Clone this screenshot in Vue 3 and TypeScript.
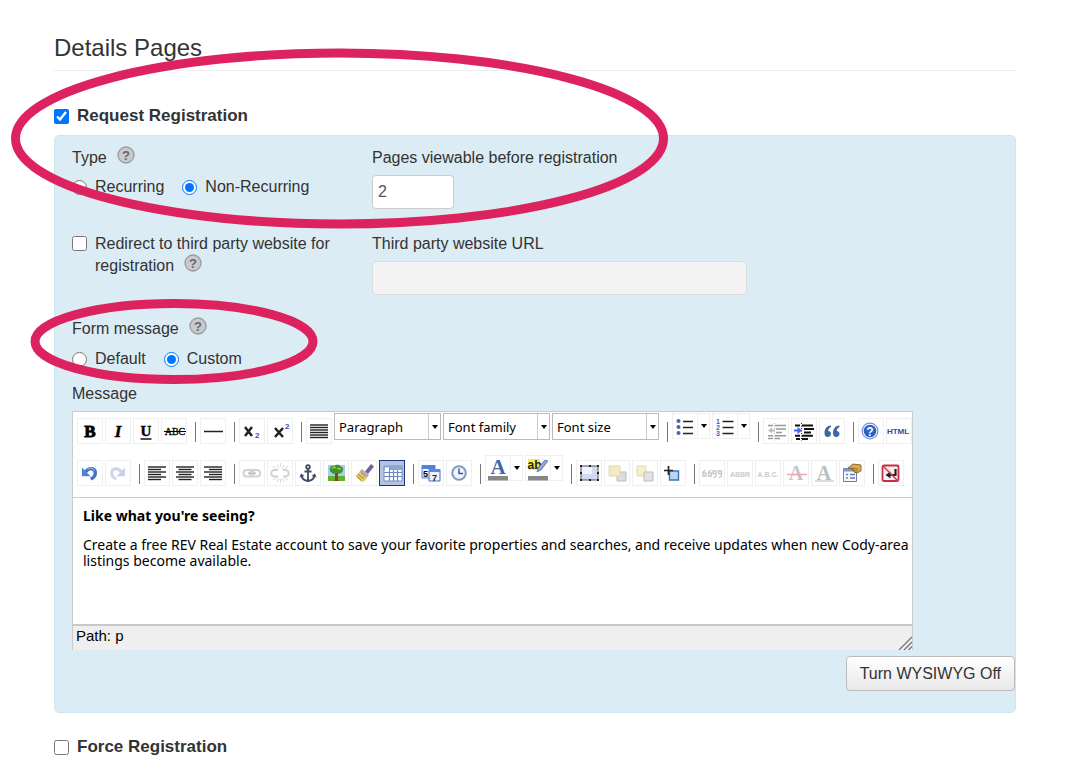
<script setup lang="ts">
import { ref } from 'vue'

interface Tool {
  kind: 'button' | 'split' | 'sep' | 'select'
  label?: string
  icon?: string
  active?: boolean
  disabled?: boolean
  options?: string[]
}

const sep = (): Tool => ({ kind: 'sep' })
const btn = (label: string, icon: string, extra: Partial<Tool> = {}): Tool => ({ kind: 'button', label, icon, ...extra })
const split = (label: string, icon: string): Tool => ({ kind: 'split', label, icon })
const pick = (label: string, options: string[]): Tool => ({ kind: 'select', label, options })

const lineYs = [7, 9.5, 12, 14.5, 17, 19.5]
function lines(align: 'left' | 'center' | 'right' | 'full'): string {
  return lineYs
    .map((y, i) => {
      const w = align === 'full' || i % 2 === 0 ? 18 : 13
      const x = align === 'right' ? 22 - w : align === 'center' ? 13 - w / 2 : 4
      return `<path d="M${x} ${y}h${w}" stroke="#222" stroke-width="1.4"/>`
    })
    .join('')
}

const serif = `font-family="Liberation Serif, serif" font-weight="bold"`
const sans = `font-family="Liberation Sans, sans-serif" font-weight="bold"`

const icons: Record<string, string> = {
  bold: `<text x="13" y="19" font-size="17" text-anchor="middle" stroke="#000" stroke-width=".9" ${serif}>B</text>`,
  italic: `<text x="13" y="19" font-size="17" text-anchor="middle" font-style="italic" stroke="#000" stroke-width=".5" ${serif}>I</text>`,
  underline: `<text x="13" y="18" font-size="15" text-anchor="middle" stroke="#000" stroke-width=".4" ${serif}>U</text><path d="M7.500 21h11" stroke="#000" stroke-width="1.4"/>`,
  strike: `<text x="14" y="17" font-size="10" text-anchor="middle" font-family="Liberation Serif, serif" stroke="#000" stroke-width=".3">ABC</text><path d="M3 13.500h22" stroke="#000" stroke-width="1"/>`,
  hr: `<path d="M4 13.500h19" stroke="#222" stroke-width="1.500"/>`,
  sub: `<path d="M6 9l7 9M13 9l-7 9" fill="none" stroke="#222" stroke-width="2.500"/><text x="16" y="20" font-size="8" fill="#4a3fc0" ${sans}>2</text>`,
  sup: `<path d="M8 10l8 9M16 10l-8 9" fill="none" stroke="#222" stroke-width="2.500"/><text x="18" y="11" font-size="8" fill="#4a3fc0" ${sans}>2</text>`,
  full: lines('full'),
  left: lines('left'),
  center: lines('center'),
  right: lines('right'),
  bullets: `<g fill="#4a64b4"><circle cx="6.500" cy="8" r="2"/><circle cx="6.500" cy="14" r="2"/><circle cx="6.500" cy="20" r="2"/></g><path d="M11 8.500h10M11 14.500h10M11 20.500h10" stroke="#222" stroke-width="1.600"/>`,
  numbers: `<g font-size="7" fill="#3a62c4" ${sans}><text x="4" y="11">1</text><text x="4" y="17">2</text><text x="4" y="23">3</text></g><path d="M10.500 8.500h11M10.500 14.500h11M10.500 20.500h11" stroke="#222" stroke-width="1.600"/>`,
  outdent: `<g stroke="#9a9a9a" stroke-width="1.600"><path d="M5 7.500h5M12 7.500h11M13 11h10M13 14.500h6M12 17.800h11M5 17.800h5M5 20.500h5M12 20.500h5"/></g><path d="M5 12.500l4-3v2h3v2h-3v2z" fill="#b8bcc4"/><path d="M11.500 5v18" stroke="#bbb" stroke-dasharray="1 1.500"/>`,
  indent: `<g stroke="#111" stroke-width="2"><path d="M4 7.500h5M11 7.500h11M13 11h10M13 14.500h7M11 17.800h11M4 17.800h5M5 21h4M11 21h6"/></g><path d="M11 12.500l-4.500-3.500v2.500H3v2h3.500V16z" fill="#3a6ae0"/><path d="M10.500 5v18" stroke="#333" stroke-dasharray="1 1.500"/>`,
  quote: `<path d="M12 7.500c-4 0-6.500 3.200-6.500 7.500 0 2.600 1.300 4 3.200 4s3.300-1.300 3.300-3.200c0-1.700-1.100-2.900-2.800-2.900.2-1.900 1.200-3.200 2.800-3.900zM20.500 7.500c-4 0-6.500 3.200-6.500 7.500 0 2.600 1.300 4 3.200 4s3.300-1.300 3.300-3.200c0-1.700-1.100-2.900-2.800-2.900.2-1.900 1.200-3.200 2.800-3.900z" fill="#3f689f"/>`,
  help: `<circle cx="12" cy="13" r="8.500" fill="#6f92dc"/><circle cx="12" cy="13" r="7.300" fill="#fff"/><circle cx="12" cy="13" r="6.300" fill="#2c60c8"/><text x="12" y="17.500" text-anchor="middle" font-size="12" fill="#fff" ${sans}>?</text>`,
  html: `<text x="12" y="16" text-anchor="middle" font-size="8" fill="#344a9c" ${sans}>HTML</text>`,
  undo: `<path d="M8.500 12c4-5.500 10-3.500 9.800 1.200-.1 2.800-1.700 4.600-4.600 5.800" fill="none" stroke="#4672c6" stroke-width="3.400"/><path d="M5 7.500v8.800h8.500z" fill="#4f80d4"/><path d="M10.500 9.500c3-2.500 6.500-1.300 6.800 1.500" fill="none" stroke="#a4c4f4" stroke-width="1"/>`,
  redo: `<path d="M16.500 12c-4-5.500-10-3.500-9.800 1.200.1 2.800 1.700 4.600 4.600 5.800" fill="none" stroke="#cfd4ea" stroke-width="3"/><path d="M20 7.500v8.800h-8.500z" fill="#c9d0ea"/>`,
  link: `<g fill="none" stroke="#d2d2d2" stroke-width="2"><rect x="4.500" y="10" width="10" height="6.500" rx="3"/><rect x="11" y="10" width="10" height="6.500" rx="3"/></g><path d="M9 13.300h8" stroke="#bbb" stroke-width="1.500"/>`,
  unlink: `<g fill="none" stroke="#d0d0d0" stroke-width="1.800"><path d="M11 10H7.500a3.200 3.200 0 000 6.500H11M16 10h2.500a3.200 3.200 0 010 6.500H16"/></g><path d="M10 4.500l2 4M17 5l-2 4M13.500 3v4M10 22l2-4M17 22l-2-4M13.500 19v4M6 6l3 2.500M21 6l-3 2.500M6 20l3-2M21 20l-3-2" stroke="#d8d8d8"/>`,
  anchor: `<g fill="none" stroke="#3c4c66" stroke-width="1.800"><circle cx="13" cy="7" r="1.800"/><path d="M13 9v12M9.500 11.500h7M6.500 15.500c.5 3.500 3.200 5 6.500 5.500 3.300-.5 6-2 6.500-5.500"/></g><path d="M4.500 17.500l1.500-4 3.500 2.500zM21.500 17.500l-1.500-4-3.500 2.500z" fill="#3c4c66"/>`,
  image: `<path d="M5 5h17v12H5z" fill="#a9cdf2"/><path d="M5 16h17v5H5z" fill="#62b02c"/><path d="M12 13h3v7l1.500 1h-6l1.500-1z" fill="#7a4a16"/><path d="M7 10c-1-3 2-5 4-4 2-2 6-1.500 6.500.5 3 .5 3.500 4 1.500 5.500-1 2-4 2-5.500 1-2 1.500-4.500 1-4.500-.5-1.500 0-2-1-2-2.500z" fill="#3f9128"/><path d="M9 8.500c1-1.500 3-1.500 4-.5M14 9c1.500-1 3.500-.5 3.500 1" fill="none" stroke="#8ad04e" stroke-width="1.500"/>`,
  brush: `<path d="M20 4l3 2.500-6 7.500-3-2.500z" fill="#74649c"/><path d="M11 9l7 6-2 2.500-7.500-6z" fill="#b8a8b0"/><path d="M8.500 11.500l7.500 6c-1 3-3 4-5.500 4.500L4 15.500c2-.5 3.500-1.500 4.500-4z" fill="#e3cc69"/><path d="M7 14l6 5M6 16.500l4.500 4M10 12.500l5 5" stroke="#927126" stroke-width=".8"/>`,
  table: `<path d="M5 6h18v15H5z" fill="#fff" stroke="#7890bd"/><path d="M5 6h18v4H5z" fill="#8da6d1"/><path d="M5 12.500h18M5 16.500h18M10.500 8v13M14.500 10v11M18.500 10v11" stroke="#6f8aba" stroke-width="1.200"/><path d="M6 7.500h4v3H6z" fill="#fff"/>`,
  date: `<path d="M4 5.500h13V18H4z" fill="#f5f8ff" stroke="#4f7dd1"/><path d="M4 5h13v4H4z" fill="#4f82de"/><text x="5" y="17" font-size="9" ${sans}>5</text><path d="M11 9.500h11V21H11z" fill="#edf2fb" stroke="#456fb8"/><path d="M11 9h11v3H11z" fill="#5b8be0"/><text x="14" y="20.500" font-size="9" fill="#222" ${sans}>7</text>`,
  time: `<circle cx="13" cy="13" r="6.800" fill="#dce8fb" stroke="#8293be" stroke-width="1.800"/><circle cx="13" cy="13" r="4.500" fill="#f5f9ff"/><path d="M13 8.500V13.500h4" fill="none" stroke="#35558f" stroke-width="1.500"/>`,
  forecolor: `<text x="13" y="18.500" text-anchor="middle" font-size="21" fill="#3d68aa" ${serif}>A</text><path d="M3 21h20v4.500H3z" fill="#888"/>`,
  backcolor: `<path d="M3 4h12v11H3z" fill="#f4ee4d"/><text x="2.500" y="14" font-size="12" fill="#222" ${sans}>ab</text><path d="M20 5l3 1-7 9-4 2 1-4z" fill="#8fa4d8" stroke="#60709d" stroke-width=".8"/><path d="M3 21h20v4.500H3z" fill="#888"/>`,
  layer: `<path d="M5 6h17v14H5z" fill="#d0dbf1" stroke="#555"/><path d="M6 7h10v7H6z" fill="#eef3fc"/><g fill="#222"><path d="M4 5h2v2H4zM13 5h2v2h-2zM21 5h2v2h-2zM4 12h2v2H4zM21 12h2v2h-2zM4 19h2v2H4zM13 19h2v2h-2zM21 19h2v2h-2z"/></g>`,
  forward: `<path d="M13 12h9v9h-9z" fill="#dcdcdc" stroke="#bbb"/><path d="M5 6h11v10H5z" fill="#f2eac4" stroke="#ded8b8"/>`,
  backward: `<path d="M5 6h9v10H5z" fill="#f5efca" stroke="#e0dabb"/><path d="M12 12h9v9h-9z" fill="#e2e2e2" stroke="#bbb"/>`,
  insertlayer: `<path d="M9.500 11h9v9h-9z" fill="#b9d6f7" stroke="#4172b4" stroke-width="1.400"/><path d="M4 10.500h9M8.500 6v9" stroke="#222" stroke-width="1.700"/>`,
  cite: `<g fill="none" stroke="#c4cac7" stroke-width="1.300"><path d="M6.500 10L4 12v4h3v-3H4M12 10l-2.500 2v4h3v-3h-3M14.500 18l2.500-2v-5h-3v2.500h3M20 18l2.500-2v-5h-3v2.500h3"/></g>`,
  abbr: `<text x="13" y="17" text-anchor="middle" font-size="7" fill="#c8cccc" ${sans}>ABBR</text>`,
  acronym: `<text x="13" y="17" text-anchor="middle" font-size="7" fill="#c8cccc" ${sans}>A.B.C.</text>`,
  del: `<text x="13" y="20" text-anchor="middle" font-size="20" fill="#c2c5c9" ${serif}>A</text><path d="M4 14.500h20" stroke="#eda7ad" stroke-width="1.500"/>`,
  ins: `<text x="13" y="20" text-anchor="middle" font-size="20" fill="#b8bfbf" ${serif}>A</text><path d="M4 21h19" stroke="#bbb"/>`,
  attribs: `<path d="M4.500 8.500h13v13h-13z" fill="#f4f7fd" stroke="#6c80ac"/><path d="M4.500 8.500h13v3h-13z" fill="#7d99cc"/><path d="M7 14.500h2M11 14.500h5M7 18h2M11 18h5" stroke="#667fb0" stroke-width="1.500"/><path d="M9 8l5-4 8 1v6l-4 2-3-1-1-3z" fill="#d9ad4a" stroke="#73531a" stroke-width=".8"/><path d="M12 8l7 1M13 10l6 1" stroke="#8b651f" stroke-width=".8"/>`,
  nobreak: `<rect x="4.500" y="5.500" width="16" height="15.500" rx="1.500" fill="#faf0f2" stroke="#c33045" stroke-width="1.800"/><path d="M17.500 9v6h-6" fill="none" stroke="#222" stroke-width="2.200"/><path d="M7.500 15l5-3.500v7z" fill="#222"/><path d="M5 6l15 15" stroke="#d23b50" stroke-width="1.600"/>`,
}

const off = { disabled: true }
const rows: Tool[][] = [
  [
    btn('Bold', 'bold'), btn('Italic', 'italic'), btn('Underline', 'underline'), btn('Strikethrough', 'strike'), sep(),
    btn('Horizontal rule', 'hr'), sep(),
    btn('Subscript', 'sub'), btn('Superscript', 'sup'), sep(),
    btn('Justify', 'full'),
    pick('Paragraph', ['Heading 1', 'Heading 2', 'Preformatted']),
    pick('Font family', ['Arial', 'Georgia', 'Verdana']),
    pick('Font size', ['10pt', '12pt', '14pt']), sep(),
    split('Bulleted list', 'bullets'), split('Numbered list', 'numbers'), sep(),
    btn('Outdent', 'outdent', off), btn('Indent', 'indent'), btn('Blockquote', 'quote'), sep(),
    btn('Help', 'help'), btn('Edit HTML source', 'html'),
  ],
  [
    btn('Undo', 'undo'), btn('Redo', 'redo', off), sep(),
    btn('Align left', 'left'), btn('Align center', 'center'), btn('Align right', 'right'), sep(),
    btn('Insert link', 'link', off), btn('Unlink', 'unlink', off), btn('Anchor', 'anchor'), btn('Insert image', 'image'),
    btn('Clean up code', 'brush'), btn('Toggle guidelines', 'table', { active: true }), sep(),
    btn('Insert date', 'date'), btn('Insert time', 'time'), sep(),
    split('Text color', 'forecolor'), split('Background color', 'backcolor'), sep(),
    btn('Insert layer', 'layer'), btn('Move forward', 'forward', off), btn('Move backward', 'backward', off), btn('New layer', 'insertlayer'), sep(),
    btn('Citation', 'cite', off), btn('Abbreviation', 'abbr', off), btn('Acronym', 'acronym', off),
    btn('Deletion', 'del', off), btn('Insertion', 'ins', off), btn('Attributes', 'attribs'), sep(),
    btn('Non-breaking space', 'nobreak'),
  ],
]

const requestReg = ref(true)
const forceReg = ref(false)
const redirect = ref(false)
const regType = ref('non')
const formMessage = ref('custom')
const pages = ref('2')
const url = ref('')
</script>

<template>
  <main class="page">
    <h1 class="title">Details Pages</h1>

    <label class="check section"><input v-model="requestReg" type="checkbox" />Request Registration</label>

    <section class="panel">
      <div class="grid">
        <div>
          <div class="line">Type <button class="help" type="button" aria-label="Help about type"><svg viewBox="0 0 18 18"><circle cx="9" cy="9" r="8" /><text x="9" y="14">?</text></svg></button></div>
          <div class="radios">
            <label><input v-model="regType" type="radio" name="regType" value="rec" />Recurring</label>
            <label><input v-model="regType" type="radio" name="regType" value="non" />Non-Recurring</label>
          </div>
        </div>
        <div class="field">
          <label for="pages">Pages viewable before registration</label>
          <input id="pages" v-model="pages" class="text small" type="text" />
        </div>
        <div class="redirect">
          <input id="redirect" v-model="redirect" type="checkbox" />
          <div>
            <label for="redirect">Redirect to third party website for registration</label>
            <button class="help" type="button" aria-label="Help about redirect"><svg viewBox="0 0 18 18"><circle cx="9" cy="9" r="8" /><text x="9" y="14">?</text></svg></button>
          </div>
        </div>
        <div class="field">
          <label for="url">Third party website URL</label>
          <input id="url" v-model="url" class="text wide" type="text" disabled />
        </div>
      </div>

      <div class="message-kind">
        <div class="line">Form message <button class="help" type="button" aria-label="Help about form message"><svg viewBox="0 0 18 18"><circle cx="9" cy="9" r="8" /><text x="9" y="14">?</text></svg></button></div>
        <div class="radios">
          <label><input v-model="formMessage" type="radio" name="formMessage" value="default" />Default</label>
          <label><input v-model="formMessage" type="radio" name="formMessage" value="custom" />Custom</label>
        </div>
      </div>

      <div id="message-label" class="message-label">Message</div>
      <div class="editor">
        <div class="toolbar">
          <div v-for="(row, r) in rows" :key="r" class="tools">
            <template v-for="(tool, t) in row" :key="t">
              <span v-if="tool.kind === 'sep'" class="sep"></span>
              <span v-else-if="tool.kind === 'select'" class="picker">
                <select :aria-label="tool.label">
                  <option>{{ tool.label }}</option>
                  <option v-for="o in tool.options" :key="o">{{ o }}</option>
                </select>
                <span class="drop"><span class="caret"></span></span>
              </span>
              <span v-else-if="tool.kind === 'split'" class="split">
                <button class="tool" type="button" :aria-label="tool.label"><svg viewBox="0 0 26 26" v-html="icons[tool.icon!]"></svg></button>
                <button class="more" type="button" :aria-label="tool.label + ' options'"><span class="caret"></span></button>
              </span>
              <button v-else class="tool" :class="{ active: tool.active }" type="button" :aria-label="tool.label" :disabled="tool.disabled">
                <svg viewBox="0 0 26 26" v-html="icons[tool.icon!]"></svg>
              </button>
            </template>
          </div>
        </div>
        <div class="content" contenteditable="true" role="textbox" aria-multiline="true" aria-labelledby="message-label">
          <p><strong>Like what you're seeing?</strong></p>
          <p>Create a free REV Real Estate account to save your favorite properties and searches, and receive updates when new Cody-area listings become available.</p>
        </div>
        <div class="status">
          <span>Path: <a href="#p">p</a></span>
          <svg class="grip" viewBox="0 0 14 14"><path d="M1 14L14 1M6 14l8-8M10.500 14l3.500-3.500" /></svg>
        </div>
      </div>

      <div class="actions"><button class="toggle" type="button">Turn WYSIWYG Off</button></div>
    </section>

    <label class="check section"><input v-model="forceReg" type="checkbox" />Force Registration</label>

    <svg class="marks" width="680" height="400" aria-hidden="true">
      <ellipse cx="339.500" cy="138.500" rx="324" ry="85.500" />
      <ellipse cx="174" cy="341.500" rx="139" ry="38" />
    </svg>
  </main>
</template>

<style>
body {
  margin: 0;
  background: #fff;
}
</style>

<style scoped>
.page {
  position: relative;
  padding: 32px 65px 8px 54px;
  color: #333;
  font: 16px/22px "Liberation Sans", Arial, sans-serif;
}
.title {
  margin: 0 0 34px;
  padding-bottom: 6px;
  border-bottom: 1px solid #eee;
  font-size: 24px;
  font-weight: normal;
  line-height: 32px;
}
input[type='checkbox'],
input[type='radio'] {
  flex: none;
  width: 15px;
  height: 15px;
  margin: 0;
}
.check {
  display: flex;
  align-items: center;
  gap: 8px;
}
.section {
  font-size: 17px;
  font-weight: bold;
}
.panel {
  margin: 8px 0 23px;
  padding: 11px 0 21px 17px;
  border: 1px solid #c9e8ee;
  border-radius: 5px;
  background: #dbecf5;
}
.grid {
  display: grid;
  grid-template-columns: 300px 1fr;
  row-gap: 24px;
}
.line {
  display: flex;
  align-items: center;
  gap: 10px;
}
.help {
  width: 18px;
  height: 18px;
  padding: 0;
  border: 0;
  background: none;
}
.line .help {
  margin: -2px 0 4px;
}
.help svg {
  display: block;
}
.help circle {
  fill: #c9cacd;
  stroke: #999b9e;
  stroke-width: 1.3;
}
.help text {
  fill: #66686c;
  font: bold 13px "Liberation Sans", sans-serif;
  text-anchor: middle;
}
.radios {
  display: flex;
  gap: 18px;
  margin-top: 7px;
}
.radios label {
  display: flex;
  align-items: center;
  gap: 8px;
}
.field {
  display: flex;
  flex-direction: column;
  gap: 6px;
}
.text {
  box-sizing: border-box;
  height: 34px;
  padding: 0 5px;
  border: 1px solid #ccc;
  border-radius: 4px;
  background: #fff;
  color: #555;
  font: inherit;
}
.text:disabled {
  border-color: #d8dcde;
  background: #f3f3f3;
}
.small {
  width: 82px;
}
.wide {
  width: 375px;
  max-width: 95%;
}
.redirect {
  display: flex;
  gap: 8px;
  padding-right: 24px;
}
.redirect input {
  margin-top: 3px;
}
.redirect .help {
  display: inline-block;
  margin: -2px 0 5px 10px;
  vertical-align: middle;
}
.redirect label {
  margin-right: -4px;
  padding-right: 4px;
}
.message-kind {
  margin-top: 23px;
}
.message-kind .radios {
  margin-top: 8px;
}
.message-label {
  margin: 13px 0 6px;
}
.editor {
  box-sizing: border-box;
  max-width: 841px;
  border: 1px solid #c8cccc;
  border-bottom: 0;
  color: #000;
}
.toolbar {
  display: flex;
  flex-direction: column;
  gap: 11px;
  padding: 1px 0 11px 4px;
  border-bottom: 1px solid #ccc;
  background: #fff;
}
.tools {
  display: flex;
  align-items: flex-end;
  gap: 2px;
  height: 31px;
}
.tool {
  box-sizing: border-box;
  flex: none;
  width: 26px;
  height: 26px;
  padding: 0;
  border: 1px solid #f0f0f0;
  background: #fff;
}
.tool svg {
  display: block;
  width: 26px;
  height: 26px;
  margin: -1px;
}
.tool.active {
  border-color: #1d3474;
  background: #b4c3e3;
}
.sep {
  flex: none;
  box-sizing: border-box;
  width: 7px;
  height: 20px;
  margin: 0 2px 2px 0;
  border-right: 1px solid #777;
}
.picker {
  display: flex;
  position: relative;
  align-self: flex-start;
  flex: none;
  width: 107px;
}
.picker select {
  box-sizing: border-box;
  width: 100%;
  height: 27px;
  padding: 0 14px 0 4px;
  border: 1px solid #bbb;
  border-radius: 0;
  appearance: none;
  background: #fff;
  color: #000;
  font: 13px "Noto Sans", sans-serif;
}
.drop {
  display: flex;
  position: absolute;
  inset: 1px 1px 1px auto;
  align-items: center;
  justify-content: center;
  width: 11px;
  border-left: 1px solid #ccc;
  pointer-events: none;
}
.caret {
  border: 3px solid transparent;
  border-top: 4px solid #000;
  border-bottom: 0;
}
.split {
  display: flex;
  align-self: flex-start;
  flex: none;
}
.more {
  display: flex;
  box-sizing: border-box;
  align-items: center;
  justify-content: center;
  width: 12px;
  height: 26px;
  padding: 0;
  border: 1px solid #f0f0f0;
  border-left: 0;
  background: #fff;
}
.content {
  box-sizing: border-box;
  min-height: 126px;
  padding: 10px 0 10px 10px;
  background: #fff;
  font: 14px/16px "Noto Sans", Verdana, sans-serif;
}
.content p {
  margin: 0 0 13px;
}
.status {
  display: flex;
  align-items: flex-start;
  justify-content: space-between;
  height: 24px;
  padding-left: 3px;
  border-top: 2px solid #c8c8c8;
  background: #efefef;
  font-size: 15px;
  line-height: 20px;
}
.status a {
  color: inherit;
  text-decoration: none;
}
.grip {
  align-self: flex-end;
  width: 14px;
  height: 14px;
  fill: none;
  stroke: #777;
  stroke-width: 1.4;
}
.actions {
  display: flex;
  justify-content: flex-end;
  margin-top: 6px;
}
.toggle {
  height: 35px;
  padding: 0 13px;
  border: 1px solid #bbb;
  border-radius: 4px;
  background: linear-gradient(#fff, #e8e8e8);
  color: #333;
  font: inherit;
}
.marks {
  position: absolute;
  top: 0;
  left: 0;
  fill: none;
  stroke: #dc225f;
  stroke-width: 9;
  pointer-events: none;
}
</style>
